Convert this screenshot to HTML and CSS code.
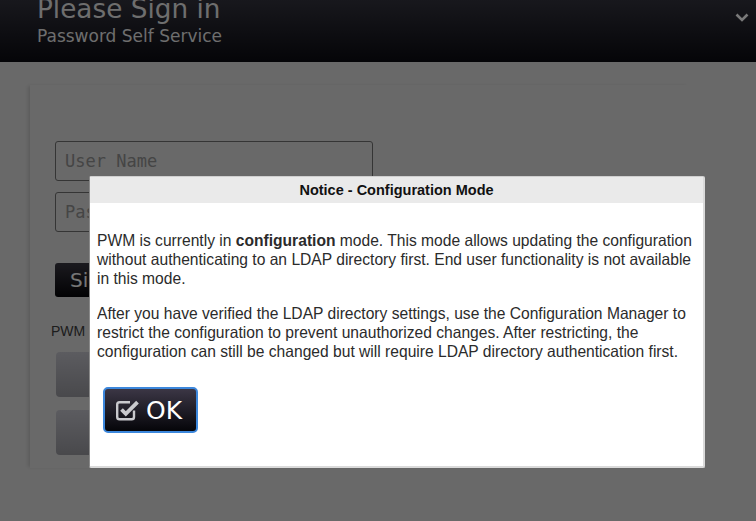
FILE: index.html
```html
<!DOCTYPE html>
<html>
<head>
<meta charset="utf-8">
<title>Please Sign in</title>
<link rel="stylesheet" href="styles.css">
</head>
<body>
<header class="header">
  <div class="header-text">
    <div class="title">Please Sign in</div>
    <div class="subtitle">Password Self Service</div>
  </div>
  <svg class="chevron" width="14" height="9" viewBox="0 0 14 9"><path d="M1.5 1.5 L7 7 L12.5 1.5" fill="none" stroke="#f2f2f2" stroke-width="2.6"/></svg>
</header>
<main class="main">
  <section class="panel">
    <form class="login">
      <input class="field" type="text" placeholder="User Name">
      <input class="field" type="password" placeholder="Password">
      <button class="signin" type="button">Sign in</button>
    </form>
    <p class="pwm">PWM</p>
    <div class="tiles">
      <div class="tile"></div>
      <div class="tile"></div>
    </div>
  </section>
</main>
<div class="overlay"></div>
<div class="dialog">
  <div class="dialog-title">Notice - Configuration Mode</div>
  <div class="dialog-body">
    <p>PWM is currently in <b>configuration</b> mode. This mode allows updating the configuration without authenticating to an LDAP directory first. End user functionality is not available in this mode.</p>
    <p>After you have verified the LDAP directory settings, use the Configuration Manager to restrict the configuration to prevent unauthorized changes. After restricting, the configuration can still be changed but will require LDAP directory authentication first.</p>
    <button class="ok" type="button">
      <svg class="ok-icon" width="23" height="22" viewBox="0 0 23 22">
        <path d="M18 11.5 V18 a2.3 2.3 0 0 1 -2.3 2.3 H3.5 a2.3 2.3 0 0 1 -2.3 -2.3 V5.5 a2.3 2.3 0 0 1 2.3 -2.3 H14" fill="none" stroke="#c9c9cd" stroke-width="2.4"/>
        <path d="M5.5 10.5 L9.8 14.8 L21.5 3.2" fill="none" stroke="#c9c9cd" stroke-width="3.8"/>
      </svg>
      <span>OK</span>
    </button>
  </div>
</div>
</body>
</html>
```

FILE: styles.css
```css
html, body {
  margin: 0;
  padding: 0;
}
body {
  background: #d2d2d2;
  font-family: "Liberation Sans", Arial, sans-serif;
  width: 756px;
  height: 521px;
  overflow: hidden;
}
.header {
  height: 62px;
  background: linear-gradient(#30303a, #0a0a10);
  display: flex;
  justify-content: space-between;
  padding: 0 7px 0 37px;
  overflow: hidden;
  font-family: "DejaVu Sans", sans-serif;
  color: #dcdcdc;
}
.title {
  font-size: 26.3px;
  line-height: 27px;
  margin-top: -4px;
}
.subtitle {
  font-size: 17px;
  line-height: 18px;
  margin-top: 4px;
}
.chevron {
  margin-top: 13px;
}
.main {
  padding: 23px 0 0 30px;
}
.panel {
  width: 660px;
  height: 383px;
  box-shadow: -3px 0 3px -1px rgba(0, 0, 0, 0.12);
  padding: 56px 0 0 21px;
  box-sizing: border-box;
}
.login {
  display: flex;
  flex-direction: column;
  align-items: flex-start;
  margin: 0;
}
.field {
  width: 318px;
  height: 40px;
  box-sizing: border-box;
  border: 1px solid #6a6a6a;
  border-radius: 3px;
  background: transparent;
  padding: 0 9px;
  font-family: "DejaVu Sans Mono", monospace;
  font-size: 17px;
  margin: 0 0 11px 4px;
}
.field::placeholder {
  color: #8a8a8a;
}
.signin {
  margin: 20px 0 0 4px;
  height: 34px;
  width: 110px;
  border: none;
  border-radius: 3px;
  background: linear-gradient(#36343e, #050508);
  color: #ececec;
  font-family: "DejaVu Sans", sans-serif;
  font-size: 20px;
  text-align: left;
  padding: 0 0 0 15px;
}
.pwm {
  margin: 26px 0 0 0;
  font-size: 14px;
  line-height: 16px;
  color: #3a3a3a;
}
.tiles {
  display: flex;
  flex-direction: column;
  gap: 13px;
  margin: 13px 0 0 5px;
}
.tile {
  width: 300px;
  height: 45px;
  border-radius: 4px;
  background: linear-gradient(#b8b8c0, #929298);
}
.overlay {
  position: fixed;
  inset: 0;
  background: rgba(0, 0, 0, 0.5);
}
.dialog {
  position: fixed;
  left: 89px;
  top: 176px;
  width: 616px;
  height: 292px;
  box-sizing: border-box;
  background: #fff;
  border: 1px solid #cfcfcf;
  border-left-color: #8a8a8a;
  border-right: 2px solid #dadada;
  border-bottom: 2px solid #dadada;
  border-radius: 2px;
  overflow: hidden;
}
.dialog-title {
  height: 26px;
  line-height: 26px;
  background: #eaeaea;
  text-align: center;
  font-weight: bold;
  font-size: 14.5px;
  color: #111;
}
.dialog-body {
  padding: 12px 8px 0 7px;
  color: #2b2b2b;
  font-size: 16.5px;
  line-height: 19px;
}
.dialog-body p {
  margin: 16px 0;
  width: 638px;
  transform: scaleX(0.946);
  transform-origin: 0 0;
}
.ok {
  margin: 26px 0 0 6px;
  width: 95px;
  height: 46px;
  box-sizing: border-box;
  border: 2px solid #3c87dc;
  border-radius: 5px;
  background: linear-gradient(#3b3645, #050509);
  display: flex;
  align-items: center;
  padding: 0 0 0 11px;
  gap: 7px;
  color: #fff;
  font-family: "DejaVu Sans", sans-serif;
  font-size: 25px;
}
.ok span {
  line-height: 25px;
}
```
